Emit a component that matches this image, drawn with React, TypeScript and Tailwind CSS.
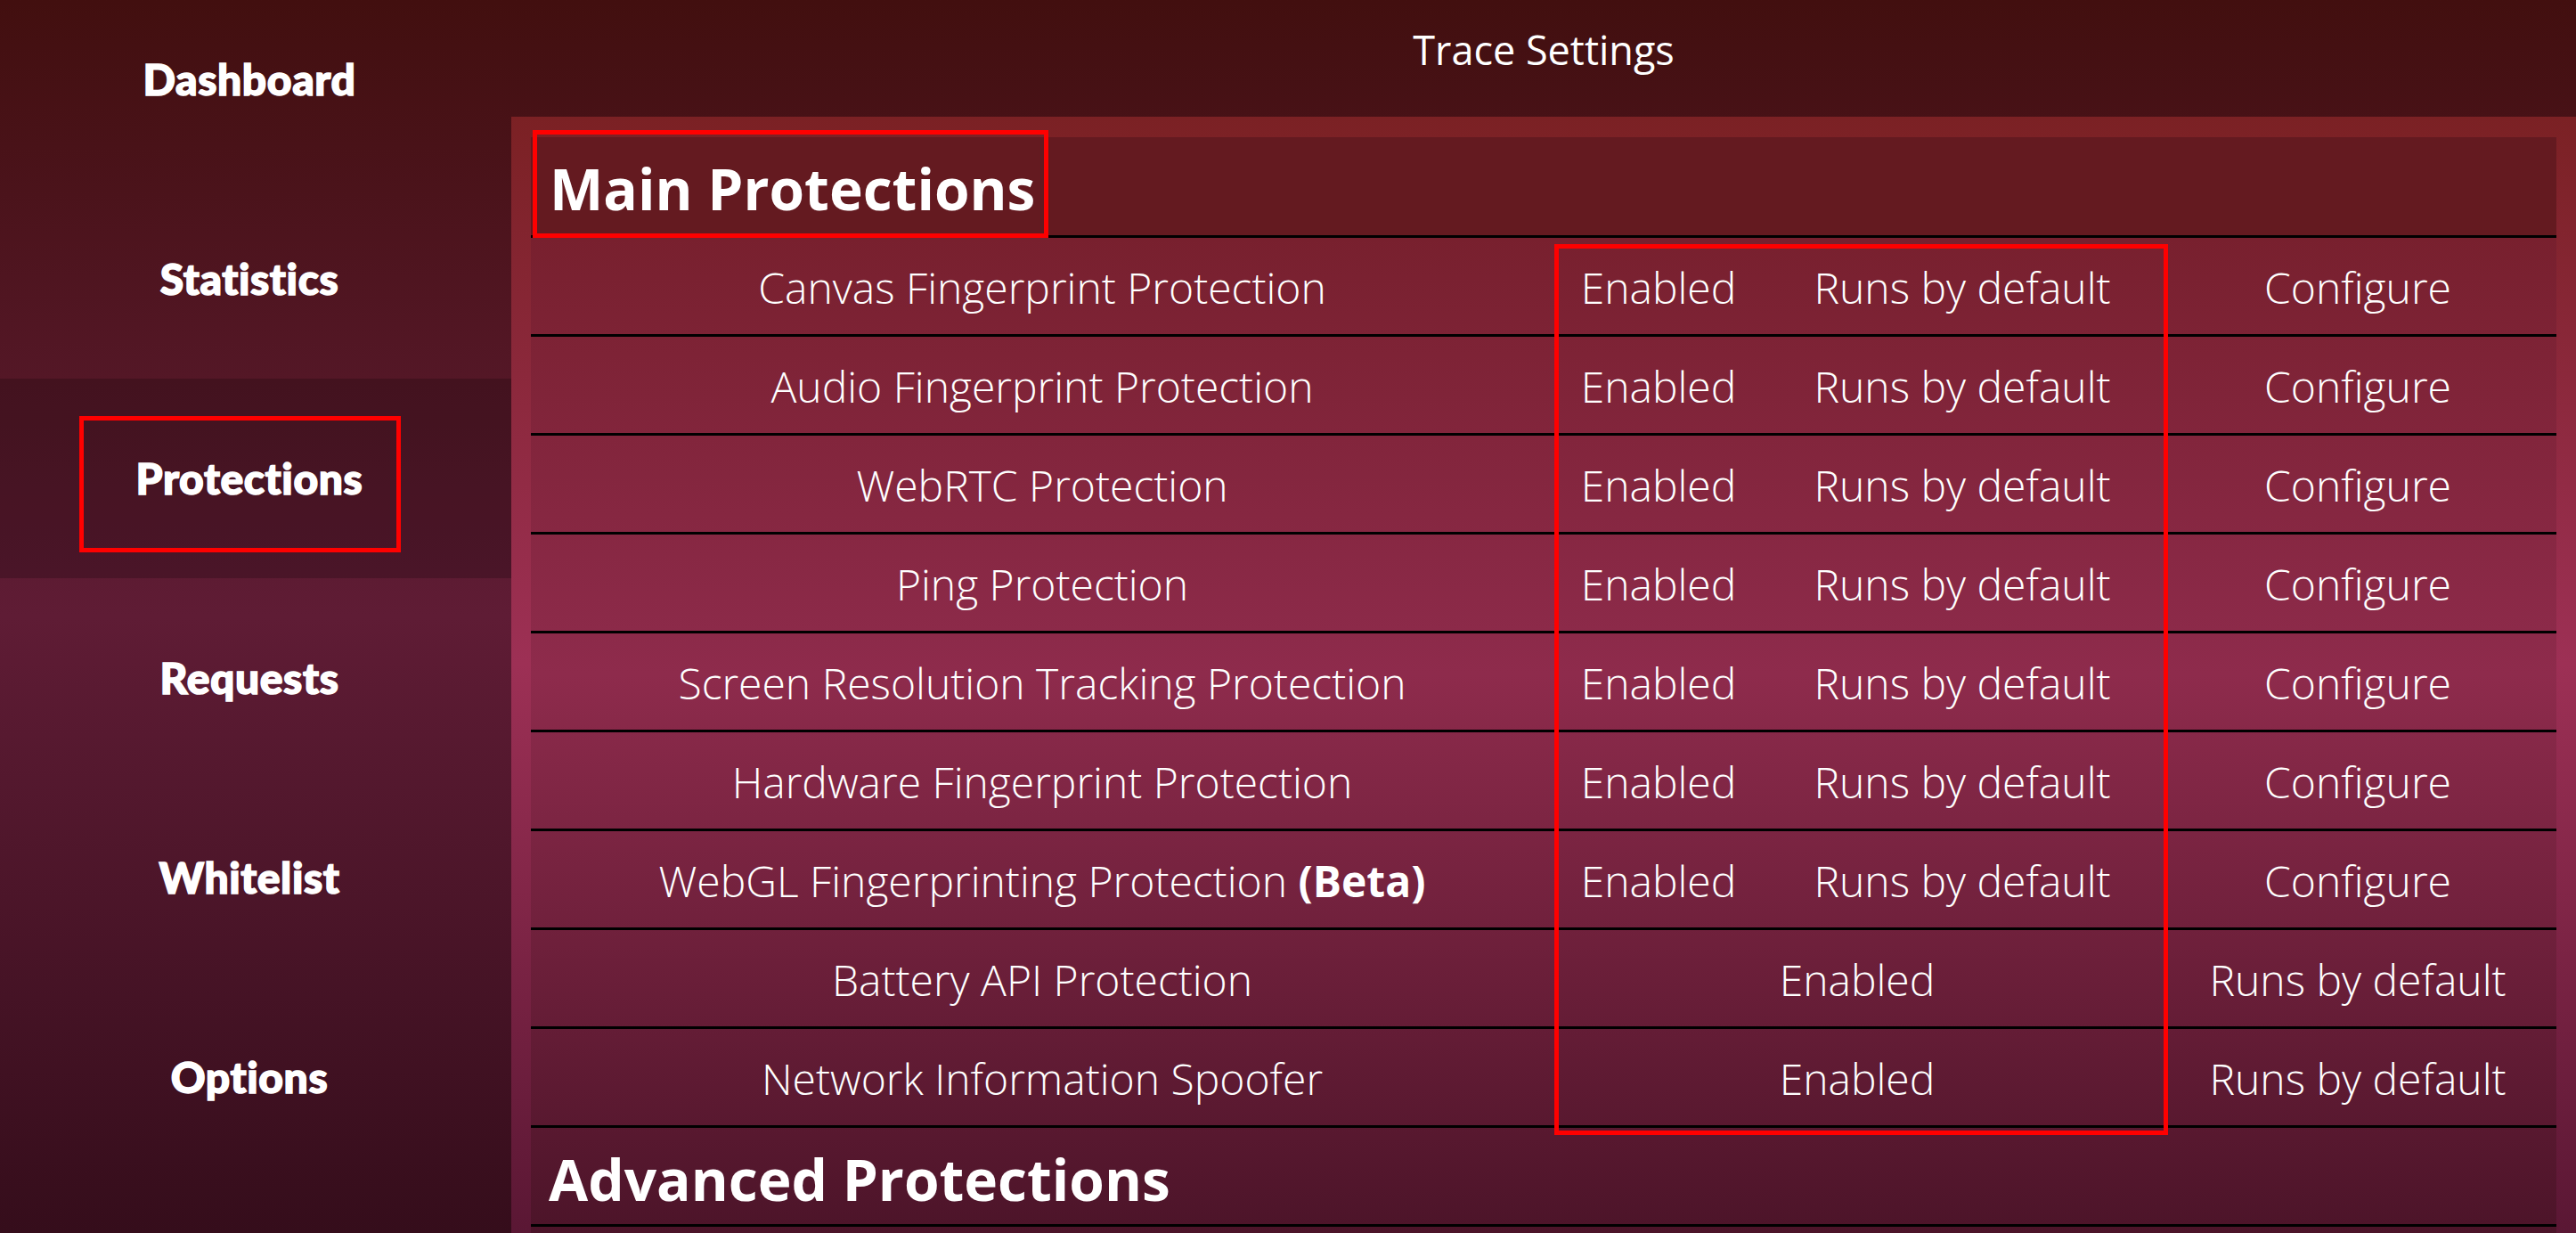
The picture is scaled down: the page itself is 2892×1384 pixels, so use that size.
const NAV = ["Dashboard", "Statistics", "Protections", "Requests", "Whitelist", "Options"];

interface Row {
  name: string;
  beta?: boolean;
  configure: boolean;
}

const ROWS: Row[] = [
  { name: "Canvas Fingerprint Protection", configure: true },
  { name: "Audio Fingerprint Protection", configure: true },
  { name: "WebRTC Protection", configure: true },
  { name: "Ping Protection", configure: true },
  { name: "Screen Resolution Tracking Protection", configure: true },
  { name: "Hardware Fingerprint Protection", configure: true },
  { name: "WebGL Fingerprinting Protection", beta: true, configure: true },
  { name: "Battery API Protection", configure: false },
  { name: "Network Information Spoofer", configure: false },
];

export default function App() {
  return (
    <div className="flex h-[1384px] w-[2892px] overflow-hidden bg-[linear-gradient(180deg,#420f0f_0%,#5f1c35_50%,#350d1b_100%)] font-['Open_Sans',sans-serif] text-white">
      {/* Sidebar */}
      <nav className="w-[574px] shrink-0">
        <div className="-mt-[23px]">
          {NAV.map((item) => (
            <div
              key={item}
              className={
                item === "Protections"
                  ? "relative flex h-[224px] items-center justify-center bg-black/20 pr-[14px]"
                  : "relative flex h-[224px] items-center justify-center pr-[14px]"
              }
            >
              <span className="font-['Lato',sans-serif] text-[48px] font-black tracking-[0.6px] [-webkit-text-stroke:1.5px_#fff]">
                {item}
              </span>
              {item === "Protections" && (
                <div className="absolute left-[89px] top-[42px] h-[153px] w-[361px] border-[5px] border-[#ff0000]" />
              )}
            </div>
          ))}
        </div>
      </nav>

      {/* Main */}
      <main className="flex min-w-0 flex-1 flex-col">
        <header className="flex h-[131px] shrink-0 items-center justify-center pb-[20px]">
          <h1 className="text-[45px] font-normal">Trace Settings</h1>
        </header>

        <div className="flex-1 bg-[linear-gradient(180deg,#7b2124_0%,#9d3055_49%,#5a1734_100%)] px-[22px] pt-[23px]">
          <div className="relative h-full bg-[linear-gradient(180deg,#641a20_0%,#78202e_9%,#8e2b4c_49%,#4c1429_100%)]">
            {/* Main Protections heading */}
            <div className="relative flex h-[113px] items-center border-b-[3px] border-black bg-[#641a20] pl-[21px] pt-[6px]">
              <h2 className="text-[64px] font-bold">Main Protections</h2>
              <div className="absolute -top-[8px] left-[2px] h-[121px] w-[579px] border-[5px] border-[#ff0000]" />
            </div>

            {ROWS.map((row) => (
              <div
                key={row.name}
                className="grid h-[111px] grid-cols-[1148px_236px_446px_442px] items-center border-b-[3px] border-black pt-[3px] text-center text-[48px] font-light"
              >
                <span>
                  {row.name}
                  {row.beta && <span className="font-bold"> (Beta)</span>}
                </span>
                {row.configure ? (
                  <>
                    <span>Enabled</span>
                    <span>Runs by default</span>
                    <span>Configure</span>
                  </>
                ) : (
                  <>
                    <span className="col-span-2">Enabled</span>
                    <span>Runs by default</span>
                  </>
                )}
              </div>
            ))}

            {/* Advanced Protections heading */}
            <div className="flex h-[111px] items-center border-b-[3px] border-black pl-[20px] pt-[8px]">
              <h2 className="text-[64px] font-bold">Advanced Protections</h2>
            </div>

            {/* annotation box around the state columns */}
            <div className="absolute left-[1149px] top-[120px] h-[1000px] w-[689px] border-[5px] border-[#ff0000]" />
          </div>
        </div>
      </main>
    </div>
  );
}
